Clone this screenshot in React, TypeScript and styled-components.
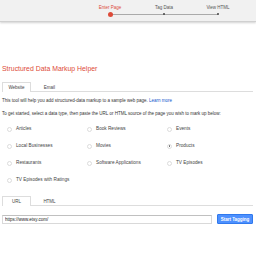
import React, { useState } from "react";
import styled, { createGlobalStyle } from "styled-components";

const GlobalStyle = createGlobalStyle`
  html, body {
    margin: 0;
    padding: 0;
    background: #fff;
    font-family: "Liberation Sans", Arial, sans-serif;
    color: #222;
  }
`;

const Header = styled.header`
  height: 21px;
  background: #f1f1f1;
  border-bottom: 1px solid #d0d0d0;
  box-shadow: 0 1px 2px rgba(0, 0, 0, 0.18);
  display: flex;
  justify-content: flex-end;
  padding-right: 11px;
`;

const Steps = styled.ol`
  list-style: none;
  margin: 0;
  padding: 0;
  display: grid;
  grid-template-columns: repeat(3, 54px);
`;

const Step = styled.li<{ $active?: boolean }>`
  display: flex;
  flex-direction: column;
  align-items: center;
  padding-top: 5px;
  font-size: 4.5px;
  line-height: 6px;
  color: ${({ $active }) => ($active ? "#dd4b39" : "#555")};
`;

const Track = styled.div<{ $first?: boolean; $last?: boolean }>`
  width: 100%;
  height: 6px;
  display: flex;
  align-items: center;
  justify-content: center;
  background: linear-gradient(#aaa, #aaa) no-repeat;
  background-size: ${({ $first, $last }) => ($first || $last ? "50% 1px" : "100% 1px")};
  background-position: ${({ $first, $last }) =>
    $first ? "right center" : $last ? "left center" : "center"};
`;

const Dot = styled.span<{ $active?: boolean }>`
  width: ${({ $active }) => ($active ? "5px" : "2px")};
  height: ${({ $active }) => ($active ? "5px" : "2px")};
  border-radius: 50%;
  background: ${({ $active }) => ($active ? "#dd4b39" : "#444")};
`;

const Main = styled.main`
  padding: 0 3px 0 2px;
`;

const Title = styled.h1`
  margin: 42px 0 8px 0;
  font-size: 6.9px;
  line-height: 10px;
  font-weight: normal;
  color: #dd4b39;
`;

const TabBar = styled.div`
  display: flex;
  border-bottom: 1px solid #ddd;
  height: 9px;
`;

const Tab = styled.button<{ $active?: boolean }>`
  font-family: inherit;
  font-size: 4.5px;
  color: #444;
  width: 29px;
  height: ${({ $active }) => ($active ? "10px" : "9px")};
  padding: 0;
  margin: 0 4px 0 0;
  background: #fff;
  border: 1px solid ${({ $active }) => ($active ? "#ddd" : "transparent")};
  border-bottom: none;
  cursor: pointer;
`;

const Text = styled.p<{ $gap: number }>`
  margin: ${({ $gap }) => $gap}px 0 0 0;
  font-size: 4.5px;
  line-height: 6px;
  color: #333;
`;

const LinkText = styled.a`
  color: #1155cc;
  text-decoration: none;
`;

const RadioGrid = styled.div`
  display: grid;
  grid-template-columns: repeat(3, 80px);
  row-gap: 11px;
  padding-left: 5px;
  margin: 9px 0 13px 0;
`;

const RadioLabel = styled.label`
  display: flex;
  align-items: center;
  gap: 4px;
  font-size: 4.7px;
  line-height: 6px;
  color: #444;
  cursor: pointer;
`;

const RadioCircle = styled.span<{ $checked?: boolean }>`
  box-sizing: border-box;
  width: 5px;
  height: 5px;
  border-radius: 50%;
  border: 1px solid #dcdcdc;
  display: flex;
  align-items: center;
  justify-content: center;
  &::after {
    content: "";
    width: 1.6px;
    height: 1.6px;
    border-radius: 50%;
    background: ${({ $checked }) => ($checked ? "#666" : "transparent")};
  }
`;

const UrlRow = styled.div`
  display: flex;
  align-items: center;
  gap: 5px;
  margin-top: 8px;
`;

const UrlInput = styled.input`
  flex: 1;
  height: 9px;
  box-sizing: border-box;
  border: 1px solid #d9d9d9;
  border-top-color: #c0c0c0;
  padding: 0 2px;
  font-family: inherit;
  font-size: 4.5px;
  color: #222;
  outline: none;
`;

const Button = styled.button`
  width: 36px;
  height: 10px;
  padding: 0;
  border: 1px solid #3079ed;
  border-radius: 1px;
  background: #4d90fe;
  color: #fff;
  font-family: inherit;
  font-size: 4.5px;
  font-weight: bold;
  cursor: pointer;
`;

const types = [
  "Articles",
  "Book Reviews",
  "Events",
  "Local Businesses",
  "Movies",
  "Products",
  "Restaurants",
  "Software Applications",
  "TV Episodes",
  "TV Episodes with Ratings",
];

export default function App() {
  const [pageTab, setPageTab] = useState("Website");
  const [srcTab, setSrcTab] = useState("URL");
  const [type, setType] = useState("Products");
  const [url, setUrl] = useState("https://www.etsy.com/");

  return (
    <>
      <GlobalStyle />
      <Header>
        <Steps>
          <Step $active>
            Enter Page
            <Track $first>
              <Dot $active />
            </Track>
          </Step>
          <Step>
            Tag Data
            <Track>
              <Dot />
            </Track>
          </Step>
          <Step>
            View HTML
            <Track $last>
              <Dot />
            </Track>
          </Step>
        </Steps>
      </Header>
      <Main>
        <Title>{"Structured Data Markup Helper"}</Title>
        <TabBar>
          {["Website", "Email"].map((t) => (
            <Tab key={t} $active={pageTab === t} onClick={() => setPageTab(t)}>
              {t}
            </Tab>
          ))}
        </TabBar>
        <Text $gap={6}>
          {"This tool will help you add structured-data markup to a sample web page. "}
          <LinkText href="#">{"Learn more"}</LinkText>
        </Text>
        <Text $gap={7}>
          {"To get started, select a data type, then paste the URL or HTML source of the page you wish to mark up below:"}
        </Text>
        <RadioGrid>
          {types.map((t) => (
            <RadioLabel key={t} onClick={() => setType(t)}>
              <RadioCircle $checked={type === t} />
              {t}
            </RadioLabel>
          ))}
        </RadioGrid>
        <TabBar>
          {["URL", "HTML"].map((t) => (
            <Tab key={t} $active={srcTab === t} onClick={() => setSrcTab(t)}>
              {t}
            </Tab>
          ))}
        </TabBar>
        <UrlRow>
          <UrlInput value={url} onChange={(e) => setUrl(e.target.value)} />
          <Button type="button">{"Start Tagging"}</Button>
        </UrlRow>
      </Main>
    </>
  );
}
